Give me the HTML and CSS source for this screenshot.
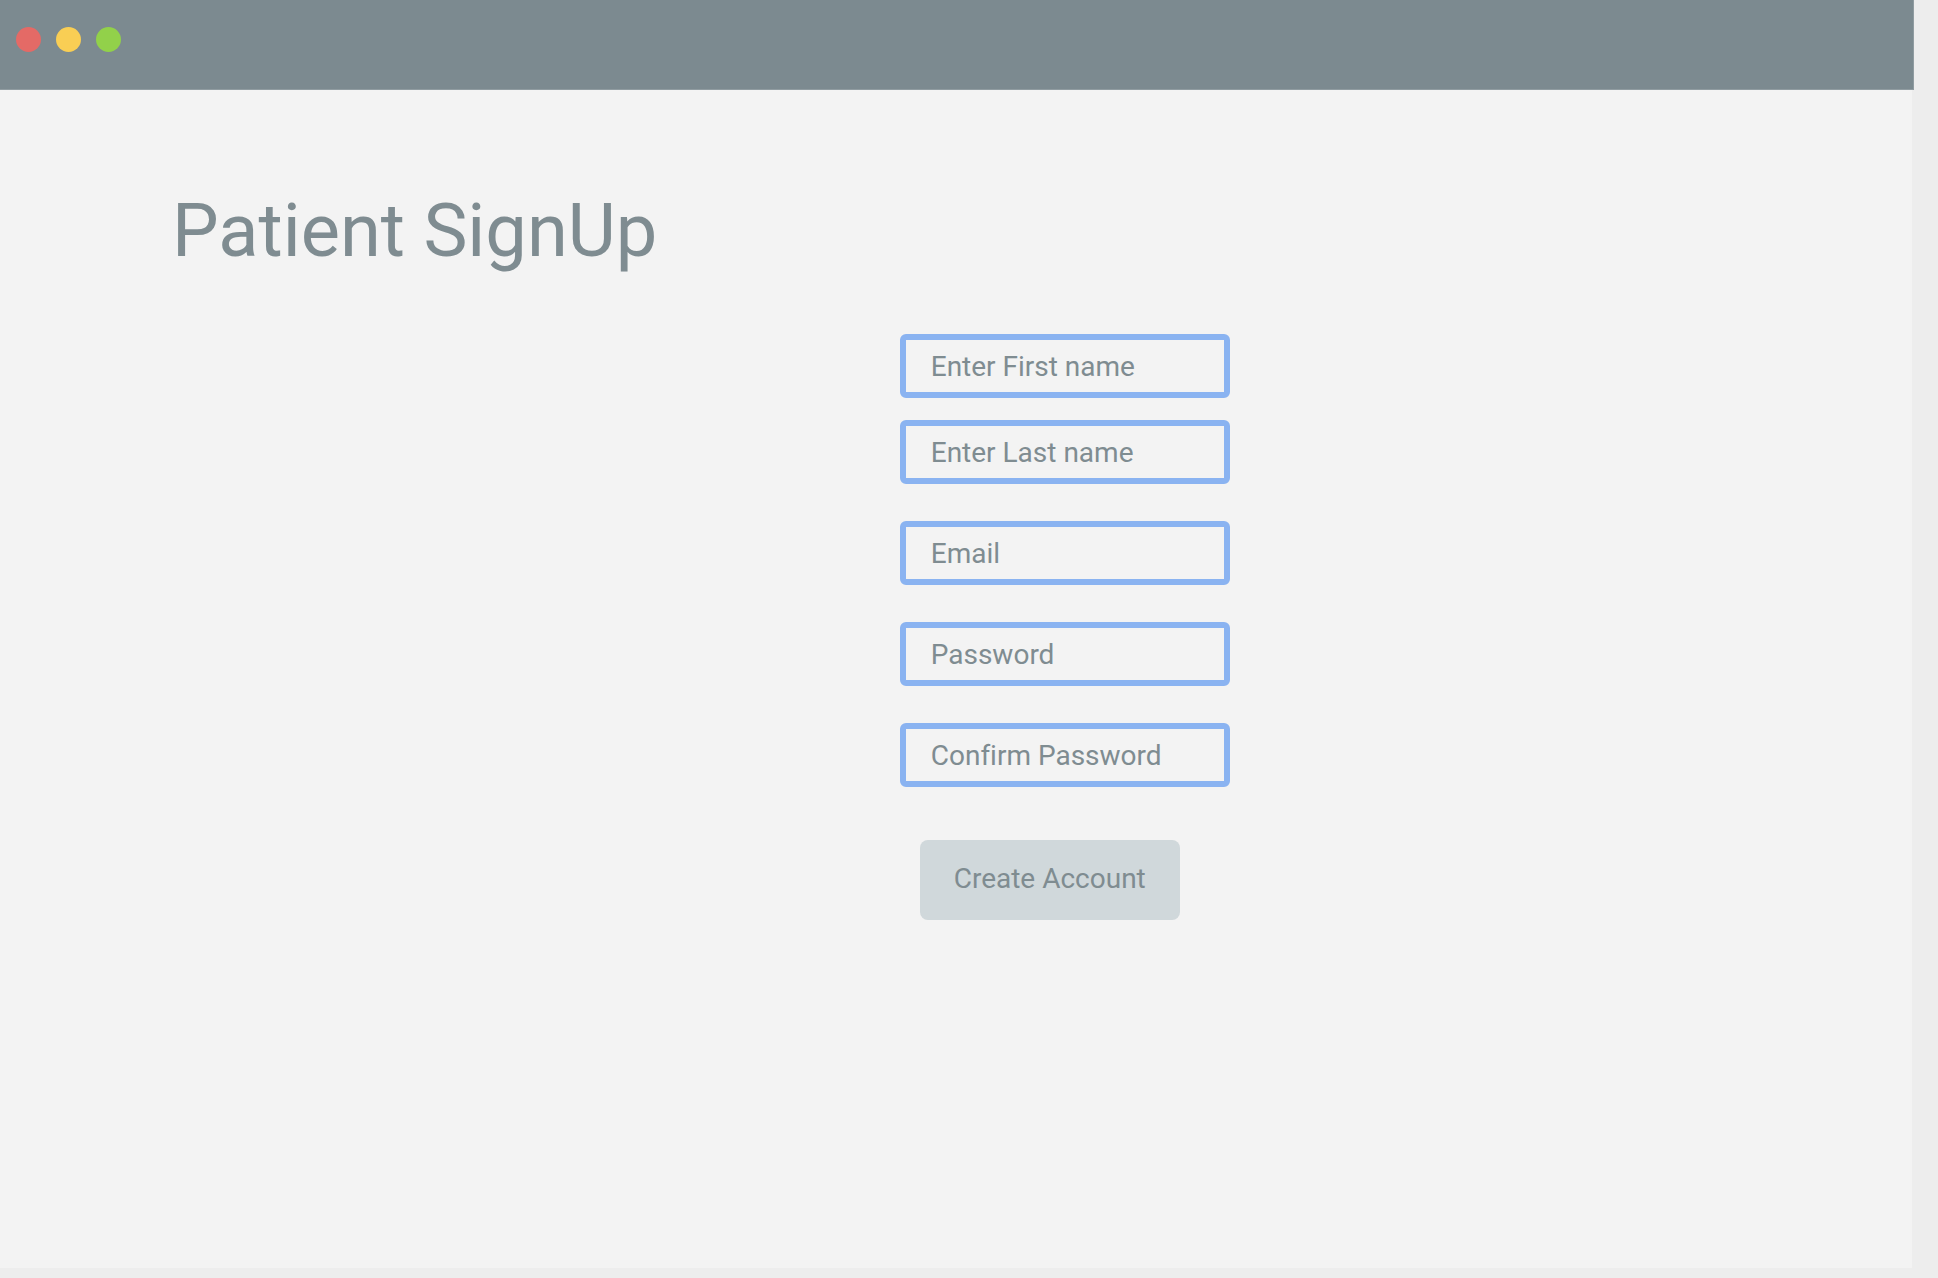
FILE: index.html
```html
<!DOCTYPE html>
<html lang="en">
<head>
<meta charset="utf-8">
<title>Patient SignUp</title>
<link rel="stylesheet" href="styles.css">
</head>
<body>
<div class="window">
  <header class="titlebar">
    <span class="dot dot-close"></span>
    <span class="dot dot-minimize"></span>
    <span class="dot dot-zoom"></span>
  </header>
  <main class="content">
    <h1 class="title">Patient SignUp</h1>
    <form class="signup">
      <div class="names">
        <input class="field" type="text" aria-label="First name" placeholder="Enter First name">
        <input class="field" type="text" aria-label="Last name" placeholder="Enter Last name">
      </div>
      <input class="field" type="email" aria-label="Email" placeholder="Email">
      <input class="field" type="password" aria-label="Password" placeholder="Password">
      <input class="field" type="password" aria-label="Confirm password" placeholder="Confirm Password">
      <button class="submit" type="submit">Create Account</button>
    </form>
  </main>
</div>
</body>
</html>
```

FILE: styles.css
```css
* {
  box-sizing: border-box;
}

body {
  margin: 0;
  background: #ededed;
  color: #7f8c91;
  font-family: Roboto, "Liberation Sans", sans-serif;
  font-variant-ligatures: none;
}

.window {
  display: flex;
  flex-direction: column;
  min-height: 100vh;
  padding: 0 24px 10px 0;
}

.titlebar {
  display: flex;
  gap: 15px;
  height: 90px;
  padding: 27px 16px;
  background: #7c8a90;
  border: solid #909ca1;
  border-width: 0 1px 1px 0;
}

.dot {
  width: 25px;
  height: 25px;
  border-radius: 50%;
}

.dot-close {
  background: #e46a66;
}

.dot-minimize {
  background: #f9ce54;
}

.dot-zoom {
  background: #92d14a;
}

.content {
  flex: 1;
  margin-right: 2px;
  padding: 99px 0 60px;
  background: #f3f3f3;
}

.title {
  margin: 0 0 61px 172px;
  font-size: 74px;
  line-height: 84px;
  font-weight: 400;
}

.signup {
  display: grid;
  grid-template-columns: 25fr 330px 19fr;
  row-gap: 37px;
  padding-left: 2px;
}

.signup > * {
  grid-column: 2;
}

.names {
  display: grid;
  row-gap: 22px;
}

.field {
  width: 100%;
  height: 64px;
  padding: 0 25px;
  border: 6px solid #8ab3f1;
  border-radius: 6px;
  background: transparent;
  color: inherit;
  font: inherit;
  font-size: 28px;
}

.field::placeholder {
  color: inherit;
  opacity: 1;
}

.submit {
  justify-self: start;
  width: 260px;
  height: 80px;
  margin: 16px 0 0 20px;
  padding: 0 0 4px;
  border: 0;
  border-radius: 8px;
  background: #d0d8db;
  color: inherit;
  font: inherit;
  font-size: 28px;
}
```
